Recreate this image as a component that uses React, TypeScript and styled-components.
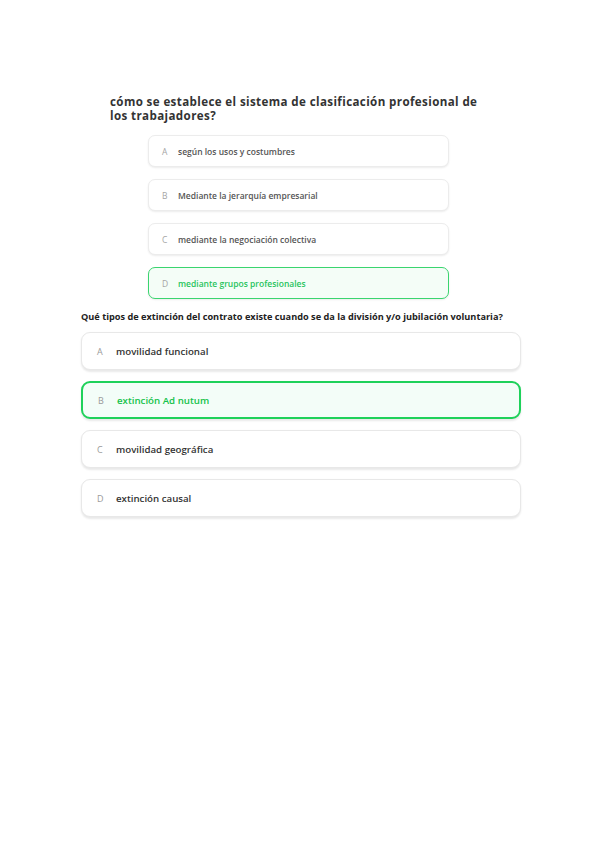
import styled, { createGlobalStyle } from "styled-components";

const GlobalStyle = createGlobalStyle`
  html, body {
    margin: 0;
    padding: 0;
    background: #ffffff;
  }
  body {
    font-family: "Open Sans", "Noto Sans", sans-serif;
    color: #333333;
  }
`;

type Option = {
  letter: string;
  text: string;
  selected?: boolean;
};

const firstOptions: Option[] = [
  { letter: "A", text: "según los usos y costumbres" },
  { letter: "B", text: "Mediante la jerarquía empresarial" },
  { letter: "C", text: "mediante la negociación colectiva" },
  { letter: "D", text: "mediante grupos profesionales", selected: true },
];

const secondOptions: Option[] = [
  { letter: "A", text: "movilidad funcional" },
  { letter: "B", text: "extinción Ad nutum", selected: true },
  { letter: "C", text: "movilidad geográfica" },
  { letter: "D", text: "extinción causal" },
];

export default function App() {
  return (
    <>
      <GlobalStyle />
      <Page>
        <FirstQuestion>
          <BigTitle>
            <TitleLine>cómo se establece el sistema de clasificación profesional de</TitleLine>
            <TitleLine>los trabajadores?</TitleLine>
          </BigTitle>
          <SmallList>
            {firstOptions.map((o) => (
              <SmallCard key={o.letter} $selected={o.selected}>
                <SmallLetter>{o.letter}</SmallLetter>
                <SmallText $selected={o.selected}>{o.text}</SmallText>
              </SmallCard>
            ))}
          </SmallList>
        </FirstQuestion>

        <SecondQuestion>
          <WideTitle>
            Qué tipos de extinción del contrato existe cuando se da la división
            y/o jubilación voluntaria?
          </WideTitle>
          <WideList>
            {secondOptions.map((o) => (
              <WideCard key={o.letter} $selected={o.selected}>
                <WideLetter>{o.letter}</WideLetter>
                <WideText $selected={o.selected}>{o.text}</WideText>
              </WideCard>
            ))}
          </WideList>
        </SecondQuestion>
      </Page>
    </>
  );
}

const Page = styled.main`
  width: 599px;
  min-height: 848px;
  padding-top: 95px;
  box-sizing: border-box;
`;

const FirstQuestion = styled.section`
  display: flex;
  flex-direction: column;
`;

const BigTitle = styled.h2`
  margin: 0 0 12px 110px;
  display: flex;
  flex-direction: column;
  font-size: 11.6px;
  line-height: 14px;
  font-weight: 700;
  color: #333333;
  letter-spacing: 0.38px;
`;

const TitleLine = styled.span`
  display: block;
  height: 14px;
  white-space: nowrap;
`;

const SmallList = styled.div`
  margin-left: 148px;
  width: 301px;
  display: flex;
  flex-direction: column;
  gap: 12px;
`;

type SelProps = { $selected?: boolean };

const SmallCard = styled.div<SelProps>`
  height: 32px;
  box-sizing: border-box;
  display: flex;
  align-items: center;
  padding-left: 13px;
  border-radius: 7px;
  border: ${(p) => (p.$selected ? "1.5px solid #3ad56f" : "1px solid #ececec")};
  background: ${(p) => (p.$selected ? "#f4fdf7" : "#ffffff")};
  box-shadow: 0 1px 2px rgba(0, 0, 0, 0.08);
`;

const SmallLetter = styled.span`
  width: 16px;
  font-size: 8.5px;
  color: #a5a5a5;
`;

const SmallText = styled.span<SelProps>`
  font-size: 8.5px;
  font-weight: 600;
  color: ${(p) => (p.$selected ? "#28c45d" : "#555555")};
`;

const SecondQuestion = styled.section`
  margin-top: 11px;
  margin-left: 81px;
  width: 440px;
  display: flex;
  flex-direction: column;
`;

const WideTitle = styled.h3`
  margin: 0 0 9px 0;
  font-size: 9.2px;
  line-height: 13px;
  font-weight: 700;
  color: #222222;
  white-space: nowrap;
`;

const WideList = styled.div`
  display: flex;
  flex-direction: column;
  gap: 11px;
`;

const WideCard = styled.div<SelProps>`
  height: 38px;
  box-sizing: border-box;
  display: flex;
  align-items: center;
  padding-left: 15px;
  border-radius: 9px;
  border: ${(p) => (p.$selected ? "2px solid #1ed15a" : "1px solid #e8e8e8")};
  background: ${(p) => (p.$selected ? "#f3fdf8" : "#ffffff")};
  box-shadow: 0 1.5px 2px rgba(0, 0, 0, 0.09);
`;

const WideLetter = styled.span`
  width: 19px;
  font-size: 9px;
  color: #9a9a9a;
`;

const WideText = styled.span<SelProps>`
  font-size: 9.7px;
  font-weight: 600;
  color: ${(p) => (p.$selected ? "#14c24a" : "#333333")};
`;
